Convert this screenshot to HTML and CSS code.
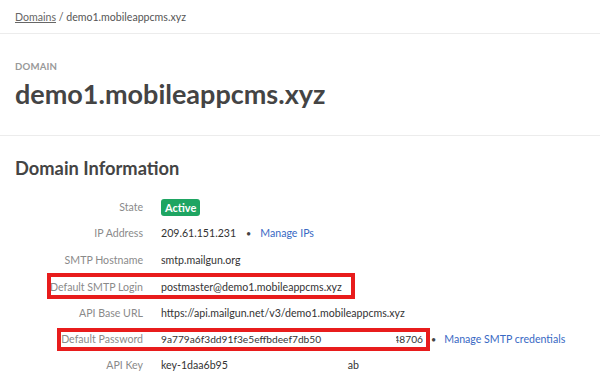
FILE: index.html
```html
<!DOCTYPE html>
<html>
<head>
<meta charset="utf-8">
<link rel="stylesheet" href="styles.css">
</head>
<body>
<div class="crumbs"><a class="crumb-link">Domains</a> / demo1.mobileappcms.xyz</div>
<header class="head">
  <div class="eyebrow">DOMAIN</div>
  <h1 class="title">demo1.mobileappcms.xyz</h1>
</header>
<section class="info">
  <h2 class="section-title">Domain Information</h2>
  <div class="grid">
    <div class="row"><div class="label">State</div><div class="value"><span class="badge">Active</span></div></div>
    <div class="row"><div class="label">IP Address</div><div class="value">209.61.151.231<span class="dot">•</span><a class="link">Manage IPs</a></div></div>
    <div class="row row-tall"><div class="label">SMTP Hostname</div><div class="value">smtp.mailgun.org</div></div>
    <div class="row"><div class="label">Default SMTP Login</div><div class="value">postmaster@demo1.mobileappcms.xyz</div><span class="mark mark-login"></span></div>
    <div class="row"><div class="label">API Base URL</div><div class="value">https://api.mailgun.net/v3/demo1.mobileappcms.xyz</div></div>
    <div class="row"><div class="label">Default Password</div><div class="value"><span class="pw"><span>9a779a6f3dd91f3e5effbdeef7db50</span><span class="clip clip-pw"><span>48706</span></span></span><span class="dot dot-pw">•</span><a class="link">Manage SMTP credentials</a></div><span class="mark mark-pw"></span></div>
    <div class="row"><div class="label">API Key</div><div class="value"><span class="key"><span class="clip clip-key1">key-1daa6b959</span><span>ab</span></span></div></div>
  </div>
</section>
</body>
</html>
```
FILE: styles.css
```css
html, body { margin: 0; padding: 0; background: #fff; }
body {
  font-family: "Lato", "Liberation Sans", sans-serif;
  color: #333;
  width: 600px;
  height: 390px;
  overflow: hidden;
}
.crumbs {
  font-size: 10.6px;
  color: #555;
  padding: 11px 15px 0 15px;
  box-sizing: border-box;
  border-bottom: 1px solid #ececec;
  height: 34px;
}
.crumb-link { color: #666; text-decoration: underline; }
.head {
  padding: 27px 15px 0 15px;
  height: 102px;
  box-sizing: border-box;
  border-bottom: 1px solid #ececec;
}
.eyebrow {
  font-size: 9.6px;
  font-weight: 700;
  color: #999;
  letter-spacing: 0.2px;
}
.title {
  margin: 5px 0 0 0;
  font-size: 27px;
  font-weight: 700;
  color: #444;
  line-height: 34px;
}
.info { padding: 20px 15px 0 15px; }
.section-title {
  margin: 0 0 14px 0;
  font-size: 18.3px;
  font-weight: 700;
  color: #444;
  line-height: 24px;
}
.grid { display: flex; flex-direction: column; }
.row {
  position: relative;
  display: grid;
  grid-template-columns: 128px 1fr;
  column-gap: 18px;
  height: 26px;
  align-items: center;
  font-size: 10.6px;
}
.row-tall { height: 28px; }
.label { text-align: right; color: #8a8a8a; white-space: nowrap; font-size: 10.6px; }
.value { color: #333; white-space: nowrap; display: flex; align-items: center; }
.badge {
  background: #1ea562;
  color: #fff;
  font-weight: 700;
  font-size: 11px;
  padding: 2px 4px;
  border-radius: 3px;
  line-height: 13px;
}
.dot { margin: 0 9px 0 10px; color: #444; font-size: 9px; }
.dot-pw { margin: 0 8px 0 8px; }
.link { color: #3869c4; }
.pw { display: flex; justify-content: space-between; width: 262px; font-size: 10.2px; }
.clip { display: inline-block; overflow: hidden; white-space: nowrap; }
.clip-pw { width: 27px; direction: rtl; }
.clip-pw span { direction: ltr; unicode-bidi: bidi-override; }
.key { display: flex; width: 198px; justify-content: space-between; }
.clip-key1 { width: 67px; }
.mark {
  position: absolute;
  border: 4px solid #e81c1c;
  box-sizing: border-box;
}
.mark-login { left: 32px; top: -1px; width: 308px; height: 26px; }
.mark-pw { left: 42px; top: 2px; width: 373px; height: 23px; }
```
